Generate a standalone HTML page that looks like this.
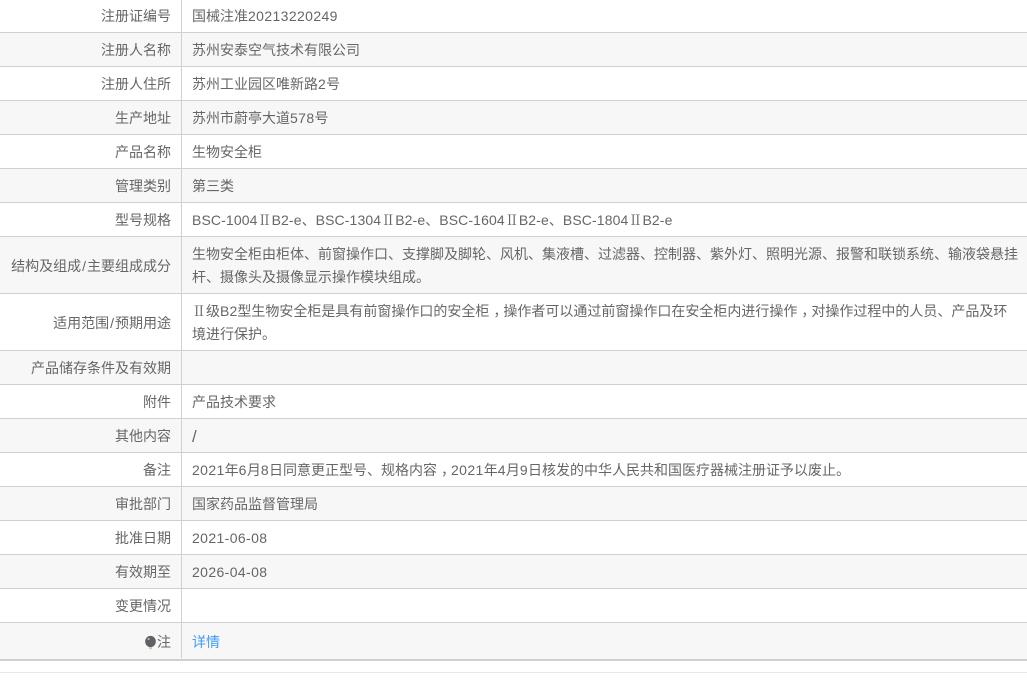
<!DOCTYPE html>
<html lang="zh">
<head>
<meta charset="utf-8">
<style>
html,body{margin:0;padding:0;background:#fff;}
body{width:1027px;height:688px;overflow:hidden;position:relative;font:14px/23px "Liberation Sans","Noto Sans CJK SC",sans-serif;color:#666;}
.r{position:absolute;left:0;width:1027px;border-bottom:1px solid #d0d0d0;}
.r.g{background:#f7f7f7;}
.a,.b{position:absolute;top:1px;bottom:-1px;display:flex;align-items:center;white-space:nowrap;}
.a{left:0;width:171px;justify-content:flex-end;}
.b{left:192px;width:830px;}
.v{position:absolute;left:181px;top:0;width:1px;height:658px;background:#d0d0d0;z-index:2;}
i{font-style:normal;letter-spacing:.38px;}
i.m{letter-spacing:.12px;}
i.s{letter-spacing:1px;margin-left:1px;}
b{font-weight:normal;font-family:"Noto Serif CJK SC",serif;display:inline-block;width:14px;text-align:center;}
u{text-decoration:none;position:relative;left:4px;}
a{color:#3e9bf5;text-decoration:none;}
</style>
</head>
<body>
<div class="v"></div>
<div class="r" style="top:0;height:32px"><div class="a" style="top:0;bottom:0">注册证编号</div><div class="b" style="top:0;bottom:0"><span>国械注准<i>20213220249</i></span></div></div>
<div class="r g" style="top:33px;height:33px"><div class="a">注册人名称</div><div class="b"><span>苏州安泰空气技术有限公司</span></div></div>
<div class="r" style="top:67px;height:33px"><div class="a">注册人住所</div><div class="b"><span>苏州工业园区唯新路<i>2</i>号</span></div></div>
<div class="r g" style="top:101px;height:33px"><div class="a">生产地址</div><div class="b"><span>苏州市蔚亭大道<i>578</i>号</span></div></div>
<div class="r" style="top:135px;height:33px"><div class="a">产品名称</div><div class="b"><span>生物安全柜</span></div></div>
<div class="r g" style="top:169px;height:33px"><div class="a">管理类别</div><div class="b"><span>第三类</span></div></div>
<div class="r" style="top:203px;height:33px"><div class="a">型号规格</div><div class="b"><span><i class="m">BSC-1004</i><b>Ⅱ</b><i class="m">B2-e</i>、<i class="m">BSC-1304</i><b>Ⅱ</b><i class="m">B2-e</i>、<i class="m">BSC-1604</i><b>Ⅱ</b><i class="m">B2-e</i>、<i class="m">BSC-1804</i><b>Ⅱ</b><i class="m">B2-e</i></span></div></div>
<div class="r g" style="top:237px;height:56px"><div class="a"><span>结构及组成<i class="s">/</i>主要组成成分</span></div><div class="b"><span>生物安全柜由柜体、前窗操作口、支撑脚及脚轮、风机、集液槽、过滤器、控制器、紫外灯、照明光源、报警和联锁系统、输液袋悬挂<br>杆、摄像头及摄像显示操作模块组成。</span></div></div>
<div class="r" style="top:294px;height:56px"><div class="a"><span>适用范围<i class="s">/</i>预期用途</span></div><div class="b"><span><b>Ⅱ</b>级<i class="m">B2</i>型生物安全柜是具有前窗操作口的安全柜<u>，</u>操作者可以通过前窗操作口在安全柜内进行操作<u>，</u>对操作过程中的人员、产品及环<br>境进行保护。</span></div></div>
<div class="r g" style="top:351px;height:33px"><div class="a">产品储存条件及有效期</div></div>
<div class="r" style="top:385px;height:33px"><div class="a">附件</div><div class="b"><span>产品技术要求</span></div></div>
<div class="r g" style="top:419px;height:33px"><div class="a">其他内容</div><div class="b"><span style="font-size:17px">/</span></div></div>
<div class="r" style="top:453px;height:33px"><div class="a">备注</div><div class="b"><span><i>2021</i>年<i>6</i>月<i>8</i>日同意更正型号、规格内容<u>，</u><i>2021</i>年<i>4</i>月<i>9</i>日核发的中华人民共和国医疗器械注册证予以废止。</span></div></div>
<div class="r g" style="top:487px;height:33px"><div class="a">审批部门</div><div class="b"><span>国家药品监督管理局</span></div></div>
<div class="r" style="top:521px;height:33px"><div class="a">批准日期</div><div class="b"><span><i>2021-06-08</i></span></div></div>
<div class="r g" style="top:555px;height:33px"><div class="a">有效期至</div><div class="b"><span><i>2026-04-08</i></span></div></div>
<div class="r" style="top:589px;height:33px"><div class="a">变更情况</div></div>
<div class="r g" style="top:623px;height:36px;border-bottom-width:2px"><div class="a"><svg width="13" height="15" viewBox="0 0 13 15"><ellipse cx="6.500" cy="6.500" rx="5.300" ry="5.600" fill="#5f6165"/><path d="M5 12h3v2.200H5z" fill="#c9c9c9"/><circle cx="4.600" cy="4" r="1" fill="#c4c4c4"/></svg>注</div><div class="b"><a href="#">详情</a></div></div>
<div style="position:absolute;left:0;top:672px;width:1027px;height:1px;background:#e8e8e8"></div>
</body>
</html>
